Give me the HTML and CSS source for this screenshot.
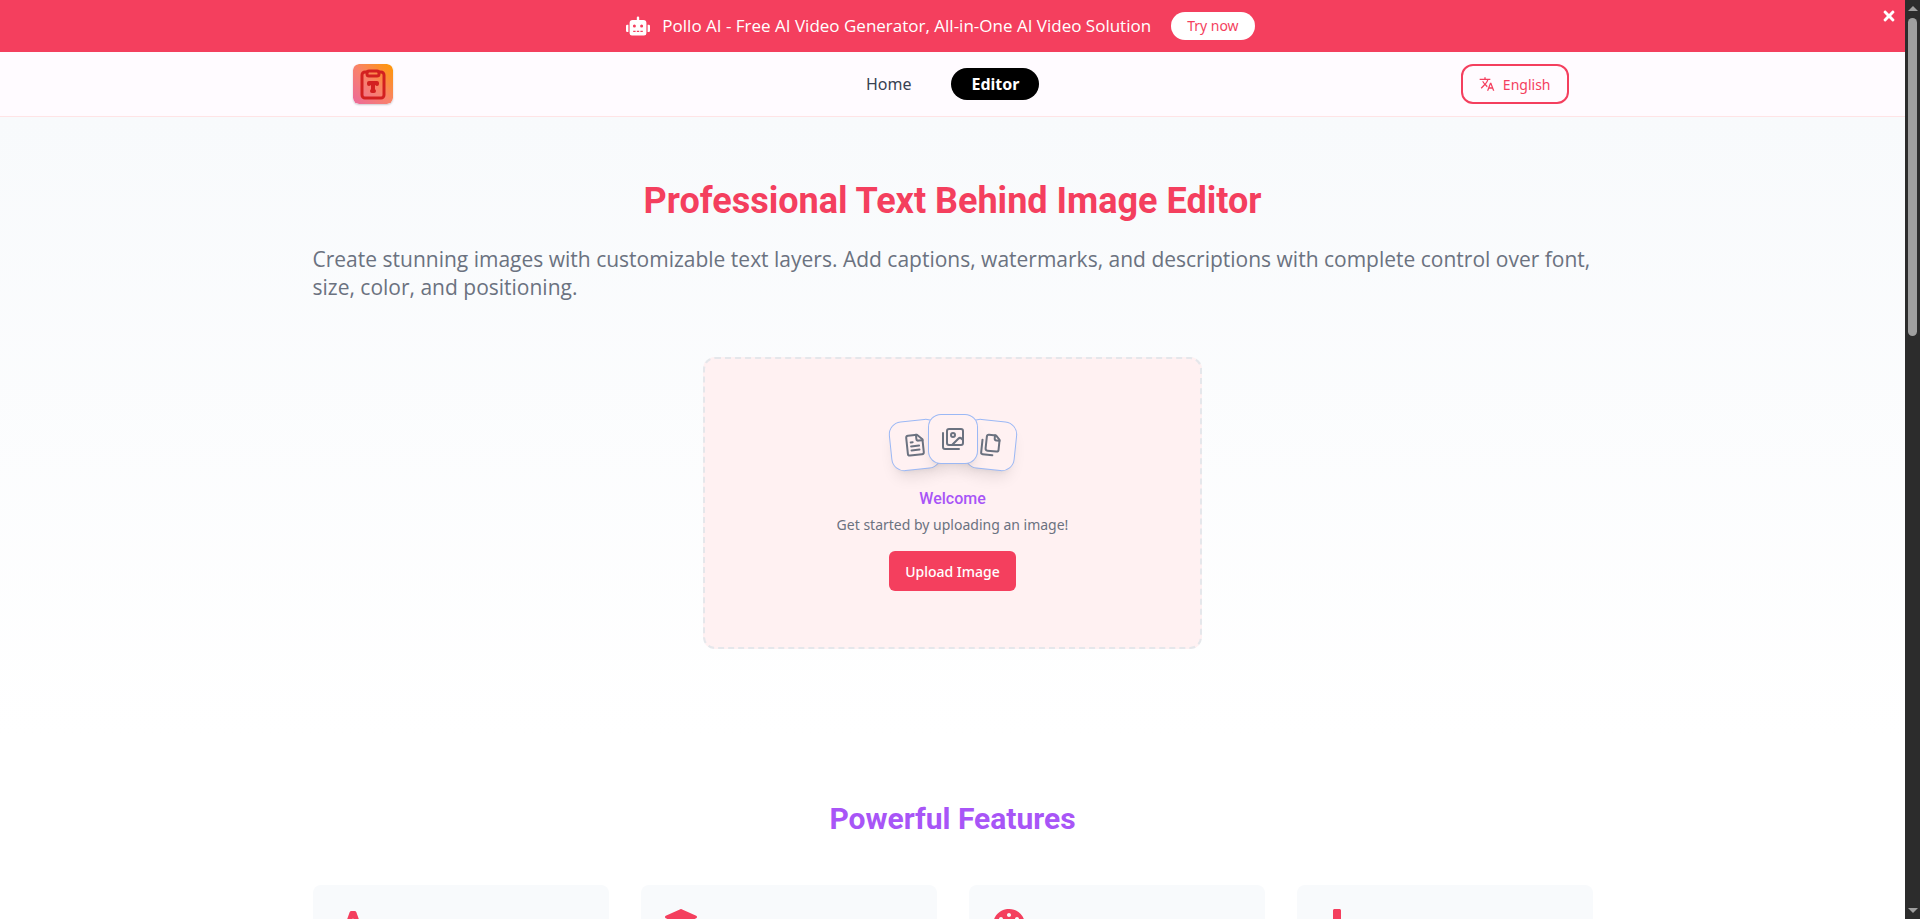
FILE: index.html
```html
<!DOCTYPE html>
<html lang="en">
<head>
    <meta charset="UTF-8">
    <meta name="viewport" content="width=device-width, initial-scale=1">
    <title>Text Behind Image Editor</title>
    <link rel="stylesheet" href="styles.css">
</head>
<body>
<div class="page">
    <div class="banner">
        <svg class="banner-icon" viewBox="0 0 640 512" fill="currentColor" aria-hidden="true"><path d="M32,224H64V416H32A31.96,31.96,0,0,1,0,384V256A31.96,31.96,0,0,1,32,224Zm512-48V448a64.06,64.06,0,0,1-64,64H160a64.06,64.06,0,0,1-64-64V176a79.97,79.97,0,0,1,80-80H288V32a32,32,0,0,1,64,0V96H464A79.97,79.97,0,0,1,544,176ZM264,256a40,40,0,1,0-40,40A40,40,0,0,0,264,256Zm-8,128H192v32h64Zm96,0H288v32h64ZM456,256a40,40,0,1,0-40,40A40,40,0,0,0,456,256Zm-8,128H384v32h64ZM640,256V384a31.96,31.96,0,0,1-32,32H576V224h32A31.96,31.96,0,0,1,640,256Z"/></svg>
        <span class="banner-text">Pollo AI - Free AI Video Generator, All-in-One AI Video Solution</span>
        <a class="banner-link" href="#">Try now</a>
        <button class="banner-close" aria-label="Close">
            <svg viewBox="0 0 352 512" width="16" height="16" fill="currentColor"><path d="M242.72 256l100.07-100.07c12.28-12.28 12.28-32.19 0-44.48l-22.24-22.24c-12.28-12.28-32.19-12.28-44.48 0L176 189.28 75.93 89.21c-12.28-12.28-32.19-12.28-44.48 0L9.21 111.45c-12.28 12.28-12.28 32.19 0 44.48L109.28 256 9.21 356.07c-12.28 12.28-12.28 32.19 0 44.48l22.24 22.24c12.28 12.28 32.2 12.28 44.48 0L176 322.72l100.07 100.07c12.28 12.28 32.2 12.28 44.48 0l22.24-22.24c12.28-12.28 12.28-32.19 0-44.48L242.72 256z"/></svg>
        </button>
    </div>

    <header class="header">
        <div class="header-inner">
            <a class="logo" href="#" aria-label="Home page">
                <svg viewBox="0 0 40 40" width="40" height="40">
                    <defs>
                        <linearGradient id="logo-bg" x1="0" y1="1" x2="1" y2="0">
                            <stop offset="0" stop-color="#ec6a9c"/>
                            <stop offset="0.5" stop-color="#f9826a"/>
                            <stop offset="1" stop-color="#ff9800"/>
                        </linearGradient>
                    </defs>
                    <rect width="40" height="40" rx="6" fill="url(#logo-bg)"/>
                    <g fill="none" stroke="#d32020" stroke-width="3" stroke-linejoin="round" stroke-linecap="round">
                        <path d="M14 8h-2a3 3 0 0 0-3 3v20a3 3 0 0 0 3 3h16a3 3 0 0 0 3-3V11a3 3 0 0 0-3-3h-2"/>
                        <rect x="14" y="7" width="12" height="5" rx="2"/>
                        <path d="M16 20v-1h8v1M20 19v8M19 27h2" stroke-width="4"/>
                    </g>
                </svg>
            </a>
            <nav class="nav">
                <a class="nav-link" href="#">Home</a>
                <a class="nav-link active" href="#">Editor</a>
            </nav>
            <button class="language">
                <svg viewBox="0 0 24 24" width="16" height="16" fill="currentColor"><path d="M12.87 15.07l-2.54-2.51.03-.03A17.52 17.52 0 0 0 14.07 6H17V4h-7V2H8v2H1v2h11.17C11.5 7.92 10.44 9.75 9 11.35 8.07 10.32 7.3 9.19 6.69 8h-2c.73 1.63 1.73 3.17 2.98 4.56l-5.09 5.02L4 19l5-5 3.11 3.11.76-2.04zM18.5 10h-2L12 22h2l1.12-3h4.75L21 22h2l-4.5-12zm-2.62 7l1.62-4.33L19.12 17h-3.24z"/></svg>
                <span>English</span>
            </button>
        </div>
    </header>

    <main>
        <section class="hero">
            <div class="container">
                <h1>Professional Text Behind Image Editor</h1>
                <p class="subtitle">Create stunning images with customizable text layers. Add captions, watermarks, and descriptions with complete control over font, size, color, and positioning.</p>

                <div class="upload">
                    <div class="tiles">
                        <div class="tile tile-left">
                            <svg class="tile-icon" viewBox="0 0 24 24"><path d="M15 2H6a2 2 0 0 0-2 2v16a2 2 0 0 0 2 2h12a2 2 0 0 0 2-2V7Z"/><path d="M14 2v4a2 2 0 0 0 2 2h4"/><path d="M10 9H8"/><path d="M16 13H8"/><path d="M16 17H8"/></svg>
                        </div>
                        <div class="tile tile-middle">
                            <svg class="tile-icon" viewBox="0 0 24 24"><path d="M18 22H4a2 2 0 0 1-2-2V6"/><path d="m22 13-1.296-1.296a2.41 2.41 0 0 0-3.408 0L11 18"/><circle cx="12" cy="8" r="2"/><rect width="16" height="16" x="6" y="2" rx="2"/></svg>
                        </div>
                        <div class="tile tile-right">
                            <svg class="tile-icon" viewBox="0 0 24 24"><path d="M20 7h-3a2 2 0 0 1-2-2V2"/><path d="M9 18a2 2 0 0 1-2-2V4a2 2 0 0 1 2-2h7l4 4v10a2 2 0 0 1-2 2Z"/><path d="M3 7.6v12.8A1.6 1.6 0 0 0 4.6 22h9.8"/></svg>
                        </div>
                    </div>
                    <h2 class="upload-title">Welcome</h2>
                    <p class="upload-text">Get started by uploading an image!</p>
                    <button class="upload-button">Upload Image</button>
                </div>
            </div>
        </section>

        <section class="features">
            <div class="container">
                <h2 class="features-title">Powerful Features</h2>
                <div class="cards">
                    <div class="card">
                        <svg class="card-icon" viewBox="0 0 448 512"><path d="M432 416h-23.41L277.88 53.69A32 32 0 0 0 247.58 32h-47.16a32 32 0 0 0-30.3 21.69L39.41 416H16a16 16 0 0 0-16 16v32a16 16 0 0 0 16 16h128a16 16 0 0 0 16-16v-32a16 16 0 0 0-16-16h-19.58l23.3-64h152.56l23.3 64H304a16 16 0 0 0-16 16v32a16 16 0 0 0 16 16h128a16 16 0 0 0 16-16v-32a16 16 0 0 0-16-16zM176.85 272L224 142.51 271.15 272z"/></svg>
                    </div>
                    <div class="card">
                        <svg class="card-icon" viewBox="0 0 512 512"><path d="M12.41 148.02l232.94 105.67c6.8 3.09 14.49 3.09 21.29 0l232.94-105.67c16.55-7.51 16.55-32.52 0-40.03L266.65 2.31a25.607 25.607 0 0 0-21.29 0L12.41 107.98c-16.55 7.51-16.55 32.53 0 40.04zm487.18 88.28l-58.09-26.33-161.64 73.27c-15.2 6.9-32.5 6.9-47.7 0L70.51 209.97l-58.1 26.33c-16.55 7.5-16.55 32.5 0 40l232.94 105.59c6.8 3.08 14.49 3.08 21.29 0L499.59 276.3c16.55-7.5 16.55-32.5 0-40zm0 127.8l-57.87-26.23-161.86 73.37c-15.2 6.9-32.5 6.9-47.7 0L70.29 337.87 12.41 364.1c-16.55 7.5-16.55 32.5 0 40l232.94 105.59c6.8 3.08 14.49 3.08 21.29 0L499.59 404.1c16.55-7.5 16.55-32.5 0-40z"/></svg>
                    </div>
                    <div class="card">
                        <svg class="card-icon" viewBox="0 0 512 512"><path d="M204.3 5C104.9 24.4 24.8 104.3 5.2 203.4c-37 187 131.7 326.4 258.8 306.7 41.2-6.4 61.4-54.6 42.5-91.7-23.1-45.4 9.9-98.4 60.9-98.4h79.7c35.8 0 64.8-29.6 64.9-65.3C511.5 97.1 368.1-26.9 204.3 5zM96 320c-17.7 0-32-14.3-32-32s14.3-32 32-32 32 14.3 32 32-14.3 32-32 32zm32-128c-17.7 0-32-14.3-32-32s14.3-32 32-32 32 14.3 32 32-14.3 32-32 32zm128-64c-17.7 0-32-14.3-32-32s14.3-32 32-32 32 14.3 32 32-14.3 32-32 32zm128 64c-17.7 0-32-14.3-32-32s14.3-32 32-32 32 14.3 32 32-14.3 32-32 32z"/></svg>
                    </div>
                    <div class="card">
                        <svg class="card-icon" viewBox="0 0 512 512"><path d="M216 0h80c13.3 0 24 10.7 24 24v168h87.7c17.8 0 26.7 21.5 14.1 34.1L269.7 378.3c-7.5 7.5-19.8 7.5-27.3 0L90.1 226.1c-12.6-12.6-3.7-34.1 14.1-34.1H192V24c0-13.3 10.7-24 24-24zm296 376v112c0 13.3-10.7 24-24 24H24c-13.3 0-24-10.7-24-24V376c0-13.3 10.7-24 24-24h146.7l49 49c20.1 20.1 52.5 20.1 72.6 0l49-49H488c13.3 0 24 10.7 24 24z"/></svg>
                    </div>
                </div>
            </div>
        </section>
    </main>
</div>

<div class="scrollbar" aria-hidden="true">
    <span class="arrow arrow-up"></span>
    <div class="track"><div class="thumb"></div></div>
    <span class="arrow arrow-down"></span>
</div>
</body>
</html>
```
FILE: styles.css
```css
* {
    box-sizing: border-box;
    margin: 0;
    padding: 0;
}

body {
    display: flex;
    height: 100vh;
    overflow: hidden;
    font-family: "Noto Sans", "Open Sans", sans-serif;
    font-size: 16px;
    line-height: 24px;
    background-color: #ffffff;
}

a {
    text-decoration: none;
}

button {
    font-family: inherit;
    border: none;
    cursor: pointer;
}

svg {
    display: block;
}

.page {
    flex: 1;
    min-width: 0;
    height: 100%;
    overflow: hidden;
}

.container {
    max-width: 1280px;
    margin: 0 auto;
}

/* Top banner */
.banner {
    position: relative;
    display: flex;
    justify-content: center;
    align-items: center;
    padding: 12px 24px 12px 0;
    background-color: #f43f5e;
    color: #ffffff;
}

.banner-icon {
    width: 24px;
    height: 24px;
    margin-right: 12px;
}

.banner-text {
    font-family: "Open Sans", sans-serif;
    font-size: 17px;
    font-weight: 500;
}

.banner-link {
    margin-left: 20px;
    padding: 4px 16px;
    border-radius: 14px;
    background-color: #ffffff;
    color: #f43f5e;
    font-size: 14px;
    line-height: 20px;
}

.banner-close {
    position: absolute;
    top: 8px;
    right: 8px;
    background: none;
    color: #ffffff;
}

/* Header */
.header {
    background-color: #fffbff;
    border-bottom: 1px solid #ffe4e6;
}

.header-inner {
    display: flex;
    justify-content: space-between;
    align-items: center;
    max-width: 1280px;
    height: 64px;
    margin: 0 auto;
    padding: 0 24px;
}

.logo {
    padding: 0 32px 0 16px;
}

.logo svg {
    border-radius: 6px;
    box-shadow: 0 1px 2px rgba(0, 0, 0, 0.2);
}

.nav {
    display: flex;
    gap: 20px;
}

.nav-link {
    padding: 4px 20px;
    border-radius: 16px;
    color: #374151;
}

.nav-link.active {
    background-color: #000000;
    color: #ffffff;
    font-weight: 700;
}

.language {
    display: flex;
    align-items: center;
    gap: 8px;
    height: 40px;
    padding: 0 16px;
    border: 2px solid #f43f5e;
    border-radius: 12px;
    background-color: transparent;
    color: #f43f5e;
    font-size: 14px;
}

/* Hero */
.hero {
    padding: 64px 0 88px;
    background: linear-gradient(to bottom, #f8fafc, #ffffff);
}

h1 {
    margin-bottom: 24px;
    font-family: Roboto, sans-serif;
    font-size: 36px;
    line-height: 40px;
    font-weight: 700;
    text-align: center;
    color: #f43f5e;
}

.subtitle {
    margin-bottom: 56px;
    font-family: "Open Sans", sans-serif;
    font-size: 21px;
    line-height: 28px;
    color: #6b7280;
}

.upload {
    max-width: 499px;
    margin: 0 auto;
    padding: 56px;
    border: 2px dashed #e5e7eb;
    border-radius: 12px;
    background-color: #fff1f2;
    text-align: center;
}

.tiles {
    display: flex;
    justify-content: center;
    margin-bottom: 24px;
}

.tile {
    display: grid;
    place-items: center;
    width: 48px;
    height: 48px;
    border-radius: 12px;
    background-color: #fff1f2;
    box-shadow: 0 0 0 1px #9bb8f5, 0 10px 15px -3px rgba(0, 0, 0, 0.1), 0 4px 6px -4px rgba(0, 0, 0, 0.1);
}

.tile-left {
    transform: translate(10px, 6px) rotate(-6deg);
}

.tile-middle {
    z-index: 1;
}

.tile-right {
    transform: translate(-10px, 6px) rotate(6deg);
}

.tile-icon {
    width: 24px;
    height: 24px;
    fill: none;
    stroke: #6b7280;
    stroke-width: 2;
    stroke-linecap: round;
    stroke-linejoin: round;
}

.upload-title {
    margin-bottom: 4px;
    font-family: Roboto, sans-serif;
    font-size: 16px;
    line-height: 24px;
    font-weight: 500;
    color: #a855f7;
}

.upload-text {
    margin-bottom: 16px;
    font-size: 14px;
    line-height: 20px;
    color: #6b7280;
}

.upload-button {
    height: 40px;
    padding: 0 16px;
    border-radius: 6px;
    background-color: #f43f5e;
    color: #ffffff;
    font-size: 14px;
    font-weight: 500;
}

/* Features */
.features {
    padding: 64px 0;
}

.features-title {
    margin-bottom: 48px;
    font-family: Roboto, sans-serif;
    font-size: 30px;
    line-height: 36px;
    font-weight: 700;
    text-align: center;
    color: #a855f7;
}

.cards {
    display: grid;
    grid-template-columns: repeat(4, 1fr);
    gap: 32px;
}

.card {
    min-height: 180px;
    padding: 24px;
    border-radius: 8px;
    background-color: #f8fafc;
}

.card-icon {
    width: 32px;
    height: 32px;
    fill: #f43f5e;
}

/* Scrollbar */
.scrollbar {
    display: flex;
    flex-direction: column;
    align-items: center;
    justify-content: space-between;
    width: 15px;
    height: 100%;
    padding: 6px 0;
    background-color: #2c2c2c;
}

.track {
    flex: 1;
    width: 9px;
    margin: 7px 0;
}

.thumb {
    height: 36%;
    border-radius: 5px;
    background-color: #9f9f9f;
}

.arrow {
    border-left: 5px solid transparent;
    border-right: 5px solid transparent;
}

.arrow-up {
    border-bottom: 5px solid #9f9f9f;
}

.arrow-down {
    border-top: 5px solid #9f9f9f;
}
```
